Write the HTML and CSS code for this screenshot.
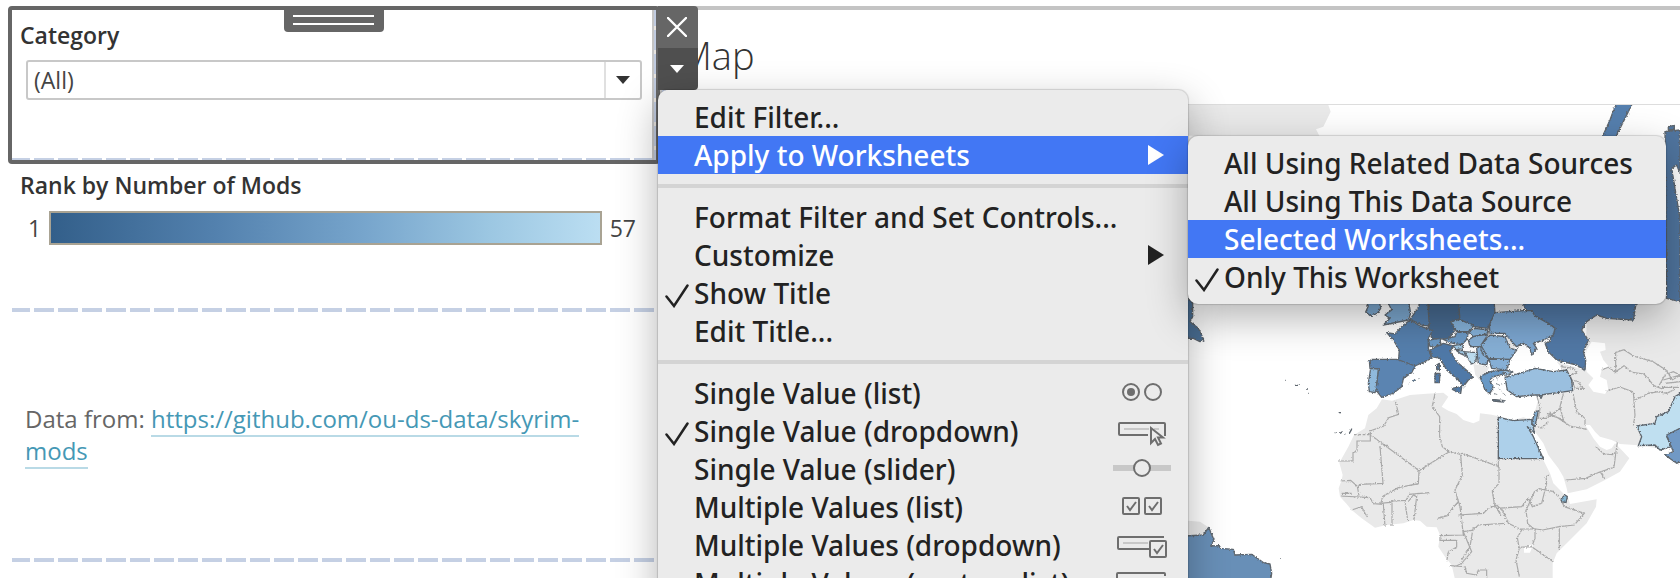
FILE: index.html
```html
<!DOCTYPE html>
<html lang="en">
<head>
<meta charset="utf-8">
<title>Dashboard – Map</title>
<link rel="stylesheet" href="styles.css">
</head>
<body>
<main class="dashboard">
  <aside class="sidebar">
    <section class="zone zone-filter">
      <div class="handle"><i></i><i></i></div>
      <label class="zone-title" for="category">Category</label>
      <div class="picker">
        <select id="category"><option>(All)</option></select>
        <span class="picker-arrow"><svg width="14" height="8" viewBox="0 0 14 8"><path d="M0 0h14L7 8z" fill="#333"/></svg></span>
      </div>
      <div class="dash dash-inner"></div>
      <div class="dash-v dash-v-inner"></div>
    </section>
    <section class="zone zone-legend">
      <h2 class="zone-title">Rank by Number of Mods</h2>
      <div class="legend"><span>1</span><div class="ramp"></div><span>57</span></div>
      <div class="dash"></div>
    </section>
    <section class="zone zone-source">
      <p>Data from: <a href="https://github.com/ou-ds-data/skyrim-mods">https://github.com/ou-ds-data/skyrim-mods</a></p>
      <div class="dash"></div>
    </section>
  </aside>
  <div class="dash-v"></div>
  <section class="sheet">
    <h1>Map</h1>
    <svg class="map" viewBox="658 105 1022 473" preserveAspectRatio="xMaxYMin slice" role="img" aria-label="World map">
      <defs>
        <filter id="rough" x="-5%" y="-5%" width="110%" height="110%" color-interpolation-filters="sRGB">
          <feTurbulence type="fractalNoise" baseFrequency=".22" numOctaves="2" seed="4"/>
          <feDisplacementMap in="SourceGraphic" scale="9" xChannelSelector="R" yChannelSelector="G"/>
        </filter>
      </defs>
      <g transform="translate(1420 280) scale(.33333)">
        <g fill="#e9e9e9">
          <path d="M-696-525h421l7 20-22 45-22 8 10 19h-394z"/>
          <path d="M-114 358l30 4 24-7 30-10 50-4 50-3 15 12-20 30 20 12 25 10 20 18 30 10 18-8 2-22 35 4 35 8 30 8 30-8 25 6-13 22 18 30 18 45 12 25 20 40 10 30 25 25 20 20 5 17 80-14-2 22-28 50-50 50-40 40-12 30v44H104l-9-39-20-25-20-30 5-35-10-23-30-2-20-18-20-2-30 10-50 5-35 8-40-28-30-25-17-20-18-20-4-25 9-25 3-15-10-37 27-48 17-35 33-20 10-40 25-20z"/>
          <path d="M358 345l100-15-3-30-45-55 85 25 5-140 50-60 200-40h40v470l-80 5-55-9-55-4-25-12-35-10-15-15-15-20h-15l10 15 15 25 20 25 20 10 15-5 10-15 20 20 23 25-28 40-45 25-55 28-57 12-3-15-10-35-15-25-15-20-15-20-15-35-20-28-15-20 8-40z"/>
          <path d="M222 72h88l-10 35-75-7zM255 158l20 12 15 30-20 10zM160 252l48 8-10 22-20 18-12-15z"/>
          <path d="M-696 722l36 3 30 20-20 28h-46z"/>
        </g>
        <path fill="#fff" d="M515 185l40 5 2 20-17 5 10 25 15 18-20 12-5 20 20 10 5 30-10 12-35-7-15-20 15-20-20-20-5-35 5-30zM312 800l28-8-10 26h-18z"/>
        <g filter="url(#rough)" fill="none" stroke="#a8a8a8" stroke-width="3.5">
          <path d="M-74 363l10 40-30 10-15 25-40 15v30h-40v30l-12 5v25h-42M-148 465l136 100 11 6 63-40 25-15M-12 565l9 8-2 38-60 12-45 25-8 22 28-3 10-4 38-2 10-18 60-5M-120 498l9 112-70 3-5 8M-112 496h16M45 340l-8 40 22 30 0 60 8 30 20 16 30 6 10-2 110 40v50l-20 22 6 40 20 35M235 536v27M-238 603l30-2 20 18 5 28M-240 648l90 5 10 18 30 2 5 65M-235 640h30M-205 690l30-10 10 20 8 12M-84 668v70M-45 665l8 55M-35 665l15-20 10 5-8 70M122 525l5 60-22 45 10 35-18 20-15 22-30 8M108 640l12 40 10 85-70 2v14h50v20l-25 15-5 28M115 705l75-5 15-15 25-10 20 20M130 755l30-5 15-15 80-5M130 755l25 60-30 35-20 10M230 685l75-5 20-25 12 25 28-10 15-60-2-20 10-5M250 695l15 35 35 17 48 0 20 3 50-10 45-5 30-35-60-20-15-28-20-18-40-8-15 10-25 55 5 40 25 20M345 745l0 30-10 25-38 2-5-30 15-25M335 800l65 45M418 745l0 65M298 805l-10 35 10 50M90 857l45 3 5 20 30 5 5-15h25v24M160 740l-10 60-25 40M430 420l-10-40 10-40M350 345l10 40-5 30 25 0 40-30M380 400l25 8 45 30 50 10M385 425l-20 20-12-5M460 345l10 50 25 20v20M390 395l5 12 30 10 15 15M437 600l60-5 40-18 45-15 5-40 5-35M540 575l15 22M527 500l25 22 28 2M455 300l20 5 15 20-25 0-15-40 20-5-8-15-40-5M545 270l20-8 22 15h0v-60l25-8 30 20 55 15 40 25 20 30 45-25M587 275l25-18 25 20 35 5 30 35 25 10v-5h50M560 333l40-12 40 15 5 70-5 30M645 360l40-20 30-5 25 5 25-12M715 320l20-35 25-10 20 10M730 300l50-15M735 310l45-5"/>
          <path stroke-dasharray="8 5" d="M-198 464h50"/>
        </g>
        <g filter="url(#rough)" stroke="#5e666e" stroke-width="4" stroke-linejoin="round" fill="#5b84b1">
          <path fill="#557fae" d="M590-535h50l-25 50-30 60h-40l25-55z"/>
          <path fill="#50759f" d="M735-445l45-5v130l-10-25-15 10 25 150v250l-40-10zM745-460l18-4v12l-18 2z"/>
          <path fill="#5178a5" d="M305 60h345l-10 60-80-5-30-10-30 20-15 25 20 30-15 35 7 25-2 32-25-17-60-15-25-25-10-25 15-5 5-25 10-15-20-15-45-25-20-10z"/>
          <path fill="#476a90" d="M25 60h90l5 55-25 15 10 20-20 28-50-3-10-35z"/>
          <path fill="#507aa8" d="M115 60h107l3 40-20 45-45-5-40-20z"/>
          <path fill="#557fad" d="M-100 158l25 4 20-22 25-20 30 18 38 14-13 23v30l10 30-50 23-50-10 3-38-18-30z"/>
          <path fill="#557fad" d="M-30 118l22-30 13-28h18l5 78-20-2z"/>
          <path d="M-152 243l8-5h76l53 20-10 20-25 17-5 25-25 20-35 12-17-22 7-63-25-2z"/>
          <path fill="#8fb9dc" d="M-148 265l23 2-7 63-3 8-17-3-3-25z"/>
          <path fill="#7ba6cd" d="M-165 60l42 0 5 25-10 15-20 8-15-12 8-18zM-100 60h65l7 40-7 20-75 15 20-20-15-10 20-15z"/>
          <path fill="#4f79a8" d="M30 210l40-20 30 8-10 17 20 30 35 30 15 17-15 8-15 20-15-20-35-30-20-35-25-5zM95 325l30-5-3 20-22-10zM45 280h15l-2 28H45zM50 255l8-5v22l-8-4z"/>
          <path fill="#6c9ac6" d="M25 180l35-5 3 20-33 5zM70 178l35-8 5-15 35 3-5 20-15 17-35-7z"/>
          <path fill="#85b1d8" d="M92 125l28-7 40 20-15 17-35 0zM145 155l20-10 40 5-5 12-40 8z"/>
          <path fill="#86afd5" d="M145 180l15-10 45-8-25 38-30 0zM180 200l30-35 45 5 15 35 20 5-20 28-60 0-20-13zM205 235l65 3-10 32-45-5zM170 205l15-5 20 35-5 20-25-5z"/>
          <path fill="#7ba5cf" d="M225 98l85-6h25l10 16 40 22 20 15-5 20-30 15-30 10 10 15-15 20-5-20-20-15-20 10-10-10-25-30-45 0-2-25z"/>
          <path fill="#bcdcef" d="M130 215l40 3-2 27-13 7z"/>
          <path fill="#9fc8e5" d="M100 197l30-5-4 14-20 4zM110 212l20 0 12 18-22-10z"/>
          <path fill="#6898c5" d="M180 290l30-15 40-5 5 10-40 12-5 13 10 15-10 20-15-10zM218 358l35 4-3 4-30-3z"/>
          <path fill="#9abfdf" d="M255 292l60-17 30-10 55 10 40-5 15 30 3 32-98 13-20 0-50 5-28-20zM250 270l30 5-25 12zM358 348l10-3-5 10z"/>
          <path fill="#add0ea" d="M235 412l45 10 55-4 8 40-21-18 18 30 30 66H235z"/>
          <path fill="#84afd3" d="M345 395l10-3-10 48-10-10z"/>
          <path fill="#bfdff0" d="M650 438l55-8 5-20 35-15 20-45 25-15v110l-50 25 15 30-35 10-15-15-50 2 10-27z"/>
          <path fill="#7199c5" d="M740 465l50-25v140l-10-35-10 5-35-25 25-10z"/>
          <path fill="#84b7d4" d="M425 655l10-10 7 5-4 18-13-3z"/>
          <path fill="#688fb7" d="M-706 768l56-3 16-23 16 38-10 18 26-1 4 8 38 3 5 17 50-2 35 25 20 4 5 28-3 20h-258z"/>
          <path fill="#4c7197" d="M-706 50l24 15v45l-8 15 25 20 17 35-12 5-20-10h-26z"/>
          <path stroke-width="2" d="M215 295l8 6M228 288l4 10M225 310l14 5M236 325l8 8M222 340l10 4M245 310l3 8M248 340l10 6M-34 312l4-4M-22 302l10-4-6 7zM-5 296l4 0"/>
          <path stroke-width="4" d="M-404 301h2M-376 316h12M-342 327h6M-335 340h2M-244 398h5M-256 458h3M-240 460l8-5M-227 462h3M-212 460l8-14M-419 835h2"/>
        </g>
      </g>
    </svg>
  </section>

  <div class="zone-tools">
    <button type="button" aria-label="Remove"><svg width="20" height="20" viewBox="0 0 20 20"><path d="M1 1l18 18M19 1L1 19" stroke="#fff" stroke-width="2.4" stroke-linecap="round"/></svg></button>
    <button type="button" class="open" aria-label="More options"><svg width="14" height="8" viewBox="0 0 14 8"><path d="M0 0h14L7 8z" fill="#fff"/></svg></button>
  </div>

  <div class="menu menu-main" role="menu">
    <button role="menuitem">Edit Filter...</button>
    <button role="menuitem" class="active">Apply to Worksheets<svg class="more" width="16" height="20" viewBox="0 0 16 20"><path d="M0 0l16 10L0 20z"/></svg></button>
    <hr>
    <button role="menuitem">Format Filter and Set Controls...</button>
    <button role="menuitem">Customize<svg class="more" width="16" height="20" viewBox="0 0 16 20"><path d="M0 0l16 10L0 20z"/></svg></button>
    <button role="menuitem"><svg class="check" width="24" height="24" viewBox="0 0 24 24"><path d="M1.500 12.500L9 22 22.500 1.500"/></svg>Show Title</button>
    <button role="menuitem">Edit Title...</button>
    <hr>
    <button role="menuitem">Single Value (list)<svg class="icon" width="60" height="38"><circle cx="19" cy="18" r="8"/><circle class="solid" cx="19" cy="18" r="4"/><circle cx="41" cy="18" r="8"/></svg></button>
    <button role="menuitem"><svg class="check" width="24" height="24" viewBox="0 0 24 24"><path d="M1.500 12.500L9 22 22.500 1.500"/></svg>Single Value (dropdown)<svg class="icon" width="60" height="38"><path class="faint" d="M12 17h25M42 17h5"/><path d="M36 23H8a1 1 0 0 1-1-1V12a1 1 0 0 1 1-1h44a1 1 0 0 1 1 1v12"/><path class="paper" d="M39 16v15l4-4 3 6 3-1.500-3-6h5z"/></svg></button>
    <button role="menuitem">Single Value (slider)<svg class="icon" width="60" height="38"><path class="track" d="M1 18h58"/><circle class="paper" cx="30" cy="18" r="8"/></svg></button>
    <button role="menuitem">Multiple Values (list)<svg class="icon" width="60" height="38"><rect x="11" y="10" width="16" height="16" rx="1"/><path d="M15 18l3 4 6-8"/><rect x="33" y="10" width="16" height="16" rx="1"/><path d="M37 18l3 4 6-8"/></svg></button>
    <button role="menuitem">Multiple Values (dropdown)<svg class="icon" width="60" height="38"><path class="faint" d="M11 17h25"/><path d="M37 23H7a1 1 0 0 1-1-1V12a1 1 0 0 1 1-1h45"/><rect x="38" y="15" width="16" height="16" rx="1"/><path d="M42 23l3 4 6-8"/></svg></button>
    <button role="menuitem">Multiple Values (custom list)<svg class="icon" width="60" height="38"><path d="M5 21V10a1 1 0 0 1 1-1h46a1 1 0 0 1 1 1v2"/></svg></button>
  </div>

  <div class="menu menu-sub" role="menu">
    <button role="menuitem">All Using Related Data Sources</button>
    <button role="menuitem">All Using This Data Source</button>
    <button role="menuitem" class="active">Selected Worksheets...</button>
    <button role="menuitem"><svg class="check" width="24" height="24" viewBox="0 0 24 24"><path d="M1.500 12.500L9 22 22.500 1.500"/></svg>Only This Worksheet</button>
  </div>
</main>
</body>
</html>
```
FILE: styles.css
```css
* { box-sizing: border-box; }
body {
  margin: 0;
  background: #fff;
  color: #333;
  font-family: "Open Sans", "Noto Sans", sans-serif;
}
h1, h2, p { margin: 0; }

.dashboard {
  position: relative;
  display: flex;
  height: 100vh;
  padding: 6px 0 0 8px;
  overflow: hidden;
}

/* Left column */
.sidebar { flex: 0 0 646px; display: flex; flex-direction: column; border-right: 2px solid #c4c4c4; }
.zone { position: relative; flex: none; }
.zone-title { display: block; font-size: 23px; line-height: 32px; font-weight: 600; color: #333; }

.zone-filter {
  width: 652px;
  height: 158px;
  padding: 9px 14px 0 8px;
  border: 4px solid #666;
  border-radius: 4px;
}
.handle {
  position: absolute;
  top: -4px;
  left: 272px;
  width: 100px;
  height: 26px;
  padding: 9px 10px 0 9px;
  background: #666;
  border-radius: 0 0 4px 4px;
}
.handle i { display: block; height: 2px; margin-bottom: 6px; background: #fff; }

.picker { position: relative; margin: 9px 0 0 6px; width: 616px; }
.picker select {
  display: block;
  appearance: none;
  width: 100%;
  height: 40px;
  padding: 0 48px 0 6px;
  border: 2px solid #c8c8c8;
  border-radius: 3px;
  background: #fff;
  color: #444;
  font: 400 23px "Open Sans", sans-serif;
}
.picker-arrow {
  position: absolute;
  top: 2px;
  right: 2px;
  width: 36px;
  height: 36px;
  display: flex;
  align-items: center;
  justify-content: center;
  border-left: 2px solid #e0e0e0;
  pointer-events: none;
}

.dash {
  position: absolute;
  left: 4px;
  right: 0;
  bottom: 0;
  height: 4px;
  background: repeating-linear-gradient(90deg, #c5d0e4 0 20px, #fff 20px 24px) -2px 0;
}
.dash-inner { left: 0; height: 2px; }
.dash-v {
  flex: 0 0 4px;
  background: repeating-linear-gradient(#c0cbe0 0 20px, #e8e4e0 20px 24px) 0 -4px;
}
.dash-v-inner {
  position: absolute;
  top: 0;
  bottom: 0;
  right: 0;
  width: 4px;
  border-left: 2px solid #c4c4c4;
}

.zone-legend { height: 148px; padding: 5px 0 0 12px; }
.legend { display: flex; align-items: center; gap: 8px; margin-top: 10px; padding: 0 24px 0 8px; font-size: 23px; line-height: 34px; font-weight: 400; color: #444; }
.ramp {
  flex: 1;
  height: 34px;
  border: 2px solid #a9a393;
  background: linear-gradient(90deg, #335f8a, #5381ae 30%, #77a5cc 57%, #9cc7e2 80%, #bbdef2);
}

.zone-source { height: 250px; padding: 91px 40px 0 17px; font-size: 24px; line-height: 32px; color: #666; }
.zone-source a { color: #4598b5; text-decoration: none; border-bottom: 2px solid #b9dae6; }

/* Worksheet */
.sheet { flex: 1; min-width: 0; display: flex; flex-direction: column; border-top: 4px solid #c4c4c4; }
.sheet h1 { flex: none; height: 95px; padding: 17px 13px; border-bottom: 1px solid #ddd; font-size: 38px; line-height: 56px; font-weight: 300; }
.map { flex: 1; min-height: 0; width: 100%; display: block; }

.zone-tools { position: absolute; top: 6px; left: 658px; width: 40px; display: flex; flex-direction: column; border-radius: 0 4px 4px 0; overflow: hidden; }
.zone-tools button { display: flex; align-items: center; justify-content: center; height: 42px; padding: 0 2px 0 0; border: 0; background: #666; }
.zone-tools .open { background: #4f4f4f; }

/* Menus */
.menu {
  position: absolute;
  padding: 8px 0;
  background: #ebebeb;
  border-radius: 10px;
  box-shadow: 0 0 1px 1px rgba(0, 0, 0, .14), 0 14px 40px rgba(0, 0, 0, .3);
}
.menu-main { top: 90px; left: 658px; width: 530px; }
.menu-sub { top: 136px; left: 1188px; width: 478px; }
.menu button {
  position: relative;
  display: flex;
  align-items: center;
  width: 100%;
  height: 38px;
  padding: 0 16px 0 36px;
  border: 0;
  background: none;
  color: #222;
  font: 500 28px "Noto Sans", "Open Sans", sans-serif;
  white-space: nowrap;
  text-align: left;
}
.menu .active { background: #4277f4; color: #fff; }
.menu hr { height: 4px; margin: 10px 0; border: 0; background: #d4d4d4; }
.more { margin: 0 8px 0 auto; fill: currentColor; }
.check { position: absolute; left: 7px; top: 10px; fill: none; stroke: currentColor; stroke-width: 2.500; stroke-linecap: round; }
.icon { margin-left: auto; fill: none; stroke: #6e6e6e; stroke-width: 2; }
.icon .solid { fill: #6e6e6e; stroke: none; }
.icon .paper { fill: #ebebeb; }
.icon .faint { stroke: #c8c8c8; }
.icon .track { stroke: #c8c8c8; stroke-width: 6; }
```
